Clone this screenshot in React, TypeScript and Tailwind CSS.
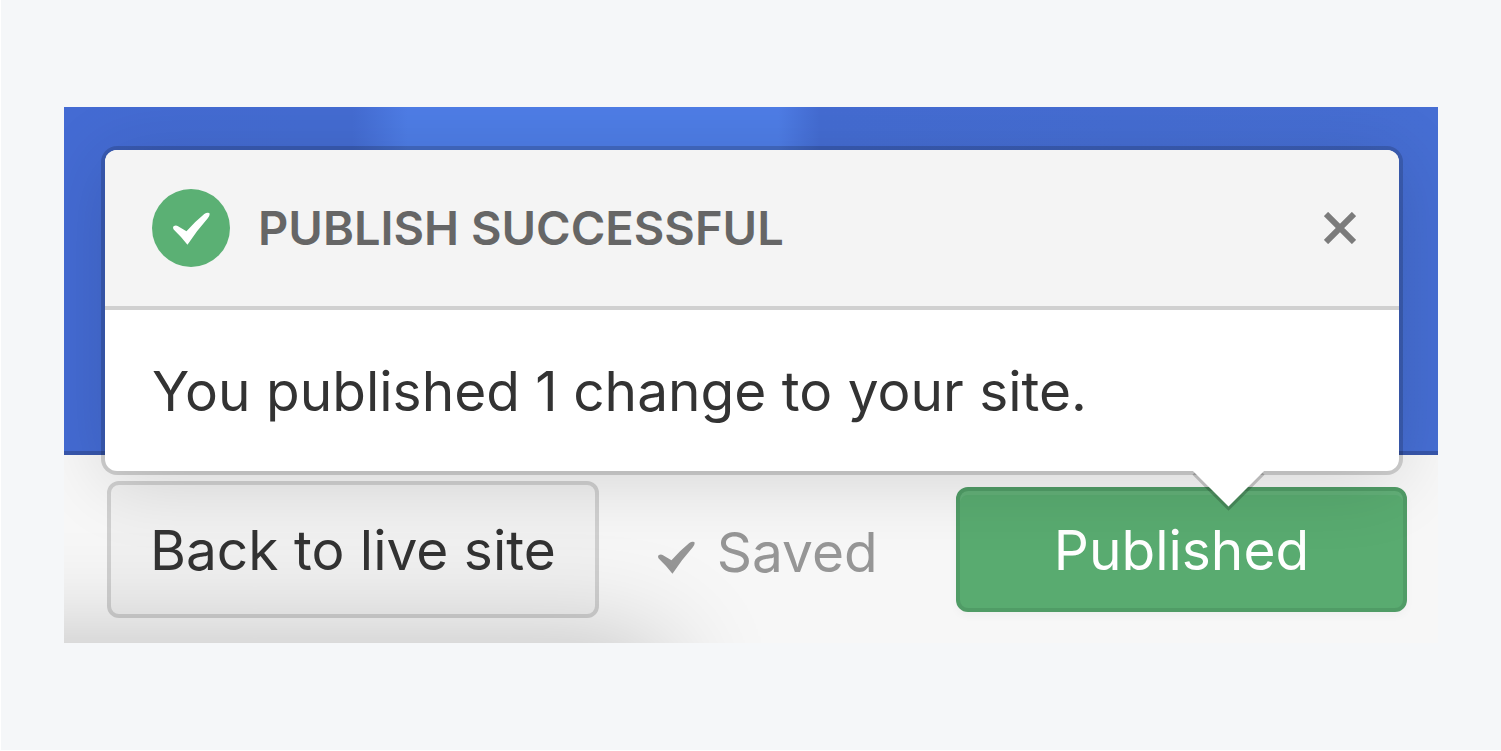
function CheckMark({ className }: { className: string }) {
  return (
    <svg viewBox="0 0 110 98" fill="currentColor" className={className} aria-hidden="true">
      <path d="M1 43 Q8 37 15 42 L40 57 Q66 28 93 6 Q101 0 108 3 Q111 9 104 18 Q72 54 43 97 Q23 72 2 52 Q-1 47 1 43 Z" />
    </svg>
  );
}

function PublishPopover() {
  return (
    <div
      role="dialog"
      aria-labelledby="publish-title"
      className="absolute z-10 top-[43px] left-[41px] right-[39px] rounded-xl bg-white shadow-[0_0_0_4px_rgba(0,0,0,0.16),0_10px_76px_rgba(0,0,0,0.14)]"
    >
      <div className="flex items-center gap-7 pl-[47px] pr-[43px] py-[39px] rounded-t-xl border-b-4 border-[#d0d0d0] bg-[#f4f4f4]">
        <span className="flex shrink-0 items-center justify-center size-[78px] rounded-full bg-[#5bb074] text-white">
          <CheckMark className="w-[37px] h-[33px]" />
        </span>
        <h2 id="publish-title" className="grow text-[47px] leading-[60px] font-semibold text-[#666]">
          PUBLISH SUCCESSFUL
        </h2>
        <button type="button" aria-label="Close" className="text-[#7b7b7b]">
          <svg viewBox="0 0 32 32" className="size-8" fill="none" stroke="currentColor" strokeWidth="6">
            <path d="M2 2 L30 30 M30 2 L2 30" />
          </svg>
        </button>
      </div>
      <p className="px-[47px] pt-[47px] pb-[46px] text-[55px] leading-[68px] text-[#333]">
        You published 1 change to your site.
      </p>

      {/* Arrow pointing at the publish button */}
      <span className="absolute -bottom-[25px] right-[145px] size-[51px] rotate-45 bg-white shadow-[3px_3px_0_rgba(0,0,0,0.2)]" />
    </div>
  );
}

export default function App() {
  return (
    <main className="min-h-screen border-l border-b border-white bg-[#f5f7f9] px-[63px] pt-[107px] font-['Inter',sans-serif]">
      <section className="relative overflow-hidden">
        {/* Site preview */}
        <div className="h-[348px] border-b-4 border-[#3756ab] bg-[linear-gradient(90deg,#446bd3_0%,#446cd2_18%,#446cd2_21%,#4e7de6_25%,#4e7de6_52%,#446cd2_55%,#466ed3_100%)]" />

        <PublishPopover />

        {/* Toolbar */}
        <div className="flex items-center bg-[#f7f7f7] pl-[43px] pr-[31px] pt-[26px] pb-[25px]">
          <button
            type="button"
            className="h-[137px] rounded-xl border-4 border-[#d0d0d0] bg-[#f1f1f1] px-[39px] text-[55px] leading-[68px] text-[#333]"
          >
            Back to live site
          </button>
          <div className="flex grow items-center gap-[22px] pl-[59px] pt-1 text-[55px] leading-[68px] text-[#969696]">
            <CheckMark className="mt-3 w-[37px] h-[33px]" />
            <span>Saved</span>
          </div>
          <button
            type="button"
            className="w-[451px] h-[125px] rounded-xl border-4 border-[#509c66] bg-[#59ab70] text-[55px] leading-[68px] text-white shadow-[inset_0_4px_0_rgba(255,255,255,0.06),0_4px_8px_rgba(0,0,0,0.03)]"
          >
            Published
          </button>
        </div>

        {/* Shade cast from below the toolbar */}
        <span className="pointer-events-none absolute top-full -left-40 w-[760px] h-40 rounded-xl shadow-[0_0_110px_rgba(0,0,0,0.24)]" />
      </section>
    </main>
  );
}
